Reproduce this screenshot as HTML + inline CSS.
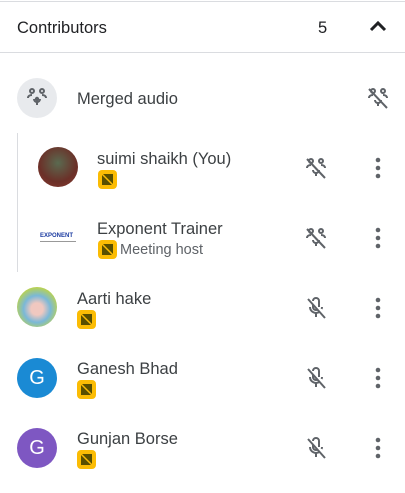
<!DOCTYPE html>
<html><head><style>
body{margin:0;width:405px;height:493px;background:#fff;position:relative;font-family:"Liberation Sans",Arial,sans-serif;color:#3c4043;overflow:hidden}
.a{position:absolute}
.t{position:absolute;font-size:16.5px;line-height:20px;white-space:nowrap}
.av{position:absolute;width:40px;height:40px;border-radius:50%;}
.b{position:absolute;width:19px;height:19px;background:#fbbc04;border-radius:4px}
.b svg{position:absolute;left:3px;top:3px}
.g{color:#fff;font-size:20px;text-align:center;line-height:40px}
</style></head><body>
<div class="a" style="left:0;top:1px;width:405px;height:1px;background:#dadce0"></div>
<div class="t" style="left:17px;top:18px;color:#202124">Contributors</div>
<div class="t" style="left:318px;top:18px;color:#202124">5</div>
<svg class="a" style="left:369px;top:20px" width="18" height="14"><path d="M2 10 L9 3 L16 10" stroke="#202124" stroke-width="3" fill="none"/></svg>
<div class="a" style="left:0;top:52px;width:405px;height:1px;background:#dadce0"></div>

<svg width="0" height="0" style="position:absolute"><defs>
<symbol id="bd" viewBox="0 0 13 13"><path d="M1 1h11v11H1z" fill="#3c3c00" opacity=".85"/><path d="M1 1 L12 12" stroke="#fbbc04" stroke-width="1.5"/></symbol>
<symbol id="mo" viewBox="0 0 24 24"><g fill="none" stroke="#5f6368" stroke-width="2"><path d="M9 5a3 3 0 0 1 6 0v6"/><path d="M9 9v2a3 3 0 0 0 4.5 2.6"/><path d="M6 11a6 6 0 0 0 9.5 4.8M18 11a6 6 0 0 1-.4 2"/><path d="M12 17v4"/><path d="M4 3l17 19"/></g></symbol>
<symbol id="ppl" viewBox="0 0 24 24"><g fill="none" stroke="#5f6368" stroke-width="2"><circle cx="7" cy="5" r="2"/><circle cx="17" cy="5" r="2"/><path d="M3 12c0-2 2-3 4-3M21 12c0-2-2-3-4-3"/><path d="M9 14a3 3 0 0 0 6 0M12 17v3"/><path d="M3 3l18 19"/></g></symbol>
<symbol id="dot" viewBox="0 0 6 22"><circle cx="3" cy="3" r="2.3" fill="#5f6368"/><circle cx="3" cy="11" r="2.3" fill="#5f6368"/><circle cx="3" cy="19" r="2.3" fill="#5f6368"/></symbol>
</defs></svg>

<div class="av" style="left:17px;top:78px;background:#e8eaed"></div>
<svg class="a" style="left:25px;top:86px" width="24" height="24" viewBox="0 0 24 24"><g fill="none" stroke="#5f6368" stroke-width="2"><circle cx="7" cy="5" r="2"/><circle cx="17" cy="5" r="2"/><path d="M3 12c0-2 2-3 4-3M21 12c0-2-2-3-4-3"/><path d="M9 13a3 3 0 0 0 6 0M12 16v3"/></g><circle cx="12" cy="13" r="2.2" fill="#5f6368"/></svg>
<div class="t" style="left:77px;top:89px">Merged audio</div>
<svg class="a" style="left:366px;top:86px" width="24" height="24"><use href="#ppl"/></svg>

<div class="a" style="left:17px;top:133px;width:1px;height:139px;background:#dadce0"></div>

<div class="av" style="left:38px;top:147px;background:radial-gradient(circle at 50% 40%,#5a6a50,#6b3028 60%,#8a3a30)"></div>
<div class="t" style="left:97px;top:149px">suimi shaikh (You)</div>
<div class="b" style="left:98px;top:170px"><svg width="13" height="13"><use href="#bd"/></svg></div>
<svg class="a" style="left:304px;top:156px" width="24" height="24"><use href="#ppl"/></svg>
<svg class="a" style="left:375px;top:157px" width="6" height="22"><use href="#dot"/></svg>

<div class="a" style="left:40px;top:233px;font-size:6px;font-weight:bold;color:#1a3aa0;letter-spacing:0">EXPONENT</div>
<div class="a" style="left:40px;top:241px;width:36px;height:1px;background:#999"></div>
<div class="t" style="left:97px;top:219px">Exponent Trainer</div>
<div class="b" style="left:98px;top:240px"><svg width="13" height="13"><use href="#bd"/></svg></div>
<div class="t" style="left:120px;top:240px;font-size:14.5px;color:#5f6368">Meeting host</div>
<svg class="a" style="left:304px;top:226px" width="24" height="24"><use href="#ppl"/></svg>
<svg class="a" style="left:375px;top:227px" width="6" height="22"><use href="#dot"/></svg>

<div class="av" style="left:17px;top:287px;background:radial-gradient(circle at 50% 55%,#f0c8c0 20%,#7ab8d8 45%,#c8d830 80%)"></div>
<div class="t" style="left:77px;top:289px">Aarti hake</div>
<div class="b" style="left:77px;top:310px"><svg width="13" height="13"><use href="#bd"/></svg></div>
<svg class="a" style="left:304px;top:296px" width="24" height="24"><use href="#mo"/></svg>
<svg class="a" style="left:375px;top:297px" width="6" height="22"><use href="#dot"/></svg>

<div class="av g" style="left:17px;top:358px;background:#1a8ad4">G</div>
<div class="t" style="left:77px;top:359px">Ganesh Bhad</div>
<div class="b" style="left:77px;top:380px"><svg width="13" height="13"><use href="#bd"/></svg></div>
<svg class="a" style="left:304px;top:366px" width="24" height="24"><use href="#mo"/></svg>
<svg class="a" style="left:375px;top:367px" width="6" height="22"><use href="#dot"/></svg>

<div class="av g" style="left:17px;top:428px;background:#7e57c2">G</div>
<div class="t" style="left:77px;top:429px">Gunjan Borse</div>
<div class="b" style="left:77px;top:450px"><svg width="13" height="13"><use href="#bd"/></svg></div>
<svg class="a" style="left:304px;top:436px" width="24" height="24"><use href="#mo"/></svg>
<svg class="a" style="left:375px;top:437px" width="6" height="22"><use href="#dot"/></svg>
</body></html>
